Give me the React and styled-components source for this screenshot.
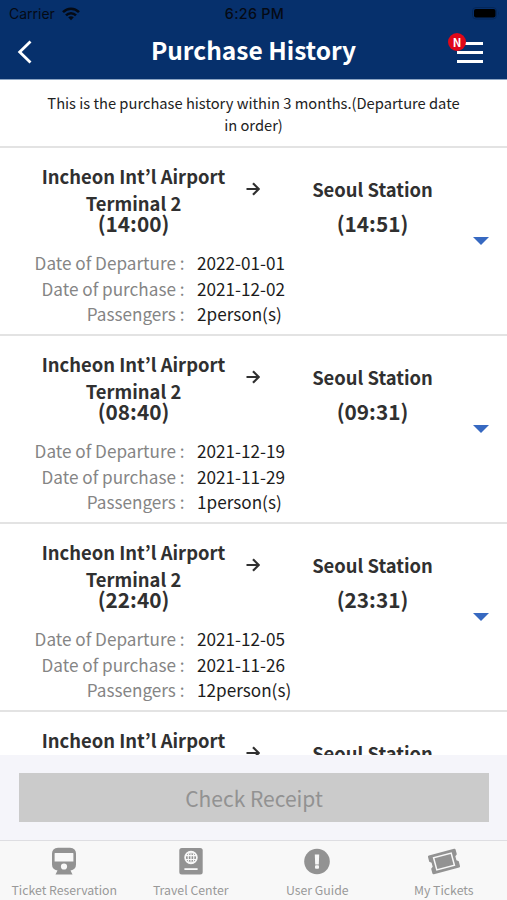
import React from 'react';
import styled, { createGlobalStyle } from 'styled-components';

const trips = [
  { departs: '14:00', arrives: '14:51', departure: '2022-01-01', purchase: '2021-12-02', passengers: 2 },
  { departs: '08:40', arrives: '09:31', departure: '2021-12-19', purchase: '2021-11-29', passengers: 1 },
  { departs: '22:40', arrives: '23:31', departure: '2021-12-05', purchase: '2021-11-26', passengers: 12 },
];

const WifiIcon = () => (
  <svg width="18" height="14" viewBox="0 0 18 14" fill="none" stroke="#050a14" strokeWidth="2.5">
    <path d="M1 5.2C5.5 0.6 12.5 0.6 17 5.2" />
    <path d="M4 8.3C6.9 5.4 11.1 5.4 14 8.3" />
    <path d="M6.2 10.2C7.8 8.8 10.2 8.8 11.8 10.2L9 13.2Z" fill="#050a14" stroke="none" />
  </svg>
);

const BatteryIcon = () => (
  <svg width="28" height="13" viewBox="0 0 28 13">
    <rect x="0.5" y="0.5" width="24" height="11.5" rx="3.5" fill="none" stroke="#04275a" />
    <rect x="2" y="2" width="21.5" height="8.5" rx="2" fill="#000000" />
    <path d="M26 4.2Q27.6 6.2 26 8.2Z" fill="#04275a" />
  </svg>
);

const BackIcon = () => (
  <svg width="16" height="24" viewBox="0 0 16 24" fill="none" stroke="#fff" strokeWidth="2.8">
    <path d="M14.5 1.4L3.7 12L14.5 22.6" />
  </svg>
);

const ArrowIcon = () => (
  <svg width="14" height="14" viewBox="0 0 14 14" fill="none" stroke="#303030" strokeWidth="2.2">
    <path d="M0.5 7H12.5M7 1.2L12.7 7L7 12.8" />
  </svg>
);

const TrainIcon = () => (
  <svg width="26" height="28" viewBox="0 0 26 28">
    <path
      fill="#929292"
      fillRule="evenodd"
      d="M7 0.8H19Q25 1.4 25 6.5V17.5Q25 22.6 19.5 23.6L21.5 27.5H4.5L6.5 23.6Q1 22.6 1 17.5V6.5Q1 1.4 7 0.8ZM4 6Q3.6 6 3.6 6.4V14.6H22.4V6.4Q22.4 6 22 6ZM13 16.4A3.1 3.1 0 1 0 13 22.6A3.1 3.1 0 1 0 13 16.4Z"
    />
  </svg>
);

const PassportIcon = () => (
  <svg width="24" height="28" viewBox="0 0 24 28" fill="none" stroke="#f8f8f8">
    <rect x="0.3" y="1" width="23.4" height="26.5" rx="2.5" fill="#929292" stroke="none" />
    <circle cx="12" cy="10.5" r="5.9" strokeWidth="1.7" />
    <ellipse cx="12" cy="10.5" rx="2.8" ry="5.9" strokeWidth="1.2" />
    <path d="M6 8.6H18M6 12.5H18M12 4.5V16.5" strokeWidth="1.2" />
    <path d="M5.4 22.1H18.6" strokeWidth="1.8" />
  </svg>
);

const GuideIcon = () => (
  <svg width="26" height="28" viewBox="0 0 26 28">
    <circle cx="13" cy="14.5" r="12.8" fill="#929292" />
    <path d="M10.8 7.5H15.2L14.8 17.4H11.2Z" fill="#f8f8f8" />
    <rect x="11" y="18.3" width="4" height="3.5" rx="1" fill="#f8f8f8" />
  </svg>
);

const TicketIcon = () => (
  <svg width="34" height="28" viewBox="0 0 34 28">
    <g transform="rotate(-15 17 14.5)">
      <path
        fill="#929292"
        d="M4 4.8H30Q31.3 4.8 31.3 6.1V10.8L29.3 12.4V16.6L31.3 18.2V22.9Q31.3 24.2 30 24.2H4Q2.7 24.2 2.7 22.9V18.2L4.7 16.6V12.4L2.7 10.8V6.1Q2.7 4.8 4 4.8Z"
      />
      <rect x="7.9" y="8.2" width="18.2" height="12.6" fill="none" stroke="#f8f8f8" strokeWidth="1.5" />
    </g>
  </svg>
);

const tabs = [
  { label: 'Ticket Reservation', Icon: TrainIcon },
  { label: 'Travel Center', Icon: PassportIcon },
  { label: 'User Guide', Icon: GuideIcon },
  { label: 'My Tickets', Icon: TicketIcon },
];

const Trip = ({ trip }) => (
  <TripItem>
    <Route>
      <Stop>
        <Station>Incheon Int’l Airport Terminal 2</Station>
        <Time>({trip.departs})</Time>
      </Stop>
      <ArrowCell><ArrowIcon /></ArrowCell>
      <Stop>
        <Station $single>Seoul Station</Station>
        <Time>({trip.arrives})</Time>
      </Stop>
      <ExpandButton type="button" aria-label="Expand">
        <svg width="16" height="8" viewBox="0 0 16 8"><path d="M0 0H16L8 8Z" fill="#3769c1" /></svg>
      </ExpandButton>
    </Route>
    <Details>
      <dt>Date of Departure :</dt>
      <dd>{trip.departure}</dd>
      <dt>Date of purchase :</dt>
      <dd>{trip.purchase}</dd>
      <dt>Passengers :</dt>
      <dd>{trip.passengers}person(s)</dd>
    </Details>
  </TripItem>
);

const App = () => (
  <Screen>
    <GlobalStyle />
    <Header>
      <StatusBar>
        <Carrier>
          Carrier
          <WifiIcon />
        </Carrier>
        <Clock>6:26 PM</Clock>
        <BatteryCell><BatteryIcon /></BatteryCell>
      </StatusBar>
      <TitleBar>
        <IconButton type="button" aria-label="Back"><BackIcon /></IconButton>
        <Title>Purchase History</Title>
        <MenuButton type="button" aria-label="Menu">
          <MenuLine />
          <MenuLine />
          <MenuLine />
          <Badge>N</Badge>
        </MenuButton>
      </TitleBar>
    </Header>
    <Notice>This is the purchase history within 3 months.(Departure date in order)</Notice>
    <TripList>
      {trips.map((trip) => <Trip key={trip.departure} trip={trip} />)}
      {/* the next trip only peeks out above the receipt bar */}
      <Route $peek>
        <Stop><Station $peek>Incheon Int’l Airport</Station></Stop>
        <ArrowCell><ArrowIcon /></ArrowCell>
        <Stop><Station $single>Seoul Station</Station></Stop>
      </Route>
    </TripList>
    <ReceiptBar>
      <ReceiptButton type="button" disabled>Check Receipt</ReceiptButton>
    </ReceiptBar>
    <TabBar>
      {tabs.map(({ label, Icon }) => (
        <Tab key={label}>
          <Icon />
          <TabLabel>{label}</TabLabel>
        </Tab>
      ))}
    </TabBar>
  </Screen>
);

const GlobalStyle = createGlobalStyle`
  * {
    box-sizing: border-box;
  }
  body {
    margin: 0;
    font-family: "Noto Sans CJK KR", "Noto Sans", sans-serif;
  }
  button {
    padding: 0;
    border: 0;
    background: none;
    font-family: inherit;
  }
  svg {
    display: block;
    flex-shrink: 0;
  }
`;

const Screen = styled.div`
  display: flex;
  flex-direction: column;
  width: 507px;
  height: 900px;
  overflow: hidden;
  background-color: #ffffff;
`;

const Header = styled.header`
  flex: none;
  height: 80px;
  background-color: #06306c;
  border-bottom: 1px solid #8da5c4;
`;

const StatusBar = styled.div`
  display: grid;
  grid-template-columns: 1fr auto 1fr;
  align-items: center;
  height: 27px;
  padding: 0 7px 0 9px;
  font-family: Inter, sans-serif;
  font-size: 14px;
  color: #050a14;
`;

const Carrier = styled.div`
  display: flex;
  align-items: center;
  gap: 7px;
`;

const Clock = styled.div`
  font-size: 14.3px;
  font-weight: 500;
  letter-spacing: 0.3px;
`;

const BatteryCell = styled.div`
  justify-self: end;
`;

const TitleBar = styled.div`
  display: grid;
  grid-template-columns: 60px 1fr 60px;
  align-items: center;
  height: 50px;
`;

const IconButton = styled.button`
  padding-left: 16px;
`;

const Title = styled.h1`
  margin: 0;
  padding-bottom: 5px;
  font-size: 24.5px;
  font-weight: 700;
  line-height: 44px;
  text-align: center;
  color: #ffffff;
`;

const MenuButton = styled.button`
  position: relative;
  display: flex;
  flex-direction: column;
  gap: 6px;
  width: 26px;
  margin-left: 10px;
`;

const MenuLine = styled.span`
  width: 26px;
  height: 3px;
  background-color: #ffffff;
`;

const Badge = styled.span`
  position: absolute;
  top: -9px;
  left: -9px;
  width: 18px;
  height: 18px;
  border-radius: 50%;
  background-color: #df0718;
  font-size: 11.5px;
  font-weight: 700;
  line-height: 18px;
  text-align: center;
  color: #ffffff;
`;

const Notice = styled.p`
  flex: none;
  height: 68px;
  margin: 0;
  padding: 12px 40px 0;
  border-bottom: 2px solid #e3e3e3;
  font-size: 14.7px;
  line-height: 21.6px;
  text-align: center;
  color: #222222;
`;

const TripList = styled.div`
  flex: 1;
  min-height: 0;
  overflow: hidden;
`;

const TripItem = styled.section`
  height: 188px;
  padding-top: 15px;
  border-bottom: 2px solid #e3e3e3;
`;

const Route = styled.div`
  display: grid;
  grid-template-columns: 211px 28px 211px 29px;
  height: 87px;
  margin-top: ${(props) => (props.$peek ? '15px' : 0)};
  padding-left: 28px;
`;

const Stop = styled.div`
  display: flex;
  flex-direction: column;
  align-items: center;
  text-align: center;
  color: #303030;
`;

const Station = styled.div`
  display: flex;
  align-items: center;
  justify-content: center;
  width: 190px;
  height: ${(props) => (props.$peek ? '27px' : '54px')};
  padding-bottom: ${(props) => (props.$single ? '2px' : 0)};
  font-size: 18.4px;
  font-weight: 700;
  line-height: 27px;
`;

const Time = styled.div`
  font-size: 20.8px;
  font-weight: 700;
  line-height: 12px;
`;

const ArrowCell = styled.div`
  display: flex;
  justify-content: center;
  padding-top: 19px;
`;

const ExpandButton = styled.button`
  align-self: end;
  width: 16px;
  margin: 0 0 5px -5px;
`;

const Details = styled.dl`
  display: grid;
  grid-template-columns: 184.5px 1fr;
  grid-auto-rows: 25.6px;
  column-gap: 12.5px;
  margin: 0;
  font-size: 17.15px;
  line-height: 25.6px;

  dt {
    text-align: right;
    color: #858585;
  }

  dd {
    margin: 0;
    color: #1c1c1c;
  }
`;

const ReceiptBar = styled.div`
  flex: none;
  height: 85px;
  padding: 18px 18px 0 19px;
  background-color: #f5f5fa;
`;

const ReceiptButton = styled.button`
  width: 100%;
  height: 49px;
  padding-top: 1px;
  background-color: #cbcbcb;
  font-size: 21px;
  line-height: 48px;
  color: #929292;
`;

const TabBar = styled.nav`
  display: grid;
  grid-template-columns: repeat(4, 1fr);
  flex: none;
  height: 60px;
  padding-left: 1px;
  border-top: 1px solid #dedee2;
  background-color: #f8f8f8;
`;

const Tab = styled.div`
  display: flex;
  flex-direction: column;
  align-items: center;
  padding-top: 6px;
`;

const TabLabel = styled.span`
  margin-top: 6px;
  font-size: 12.3px;
  line-height: 18px;
  white-space: nowrap;
  color: #999999;
`;

export default App;
